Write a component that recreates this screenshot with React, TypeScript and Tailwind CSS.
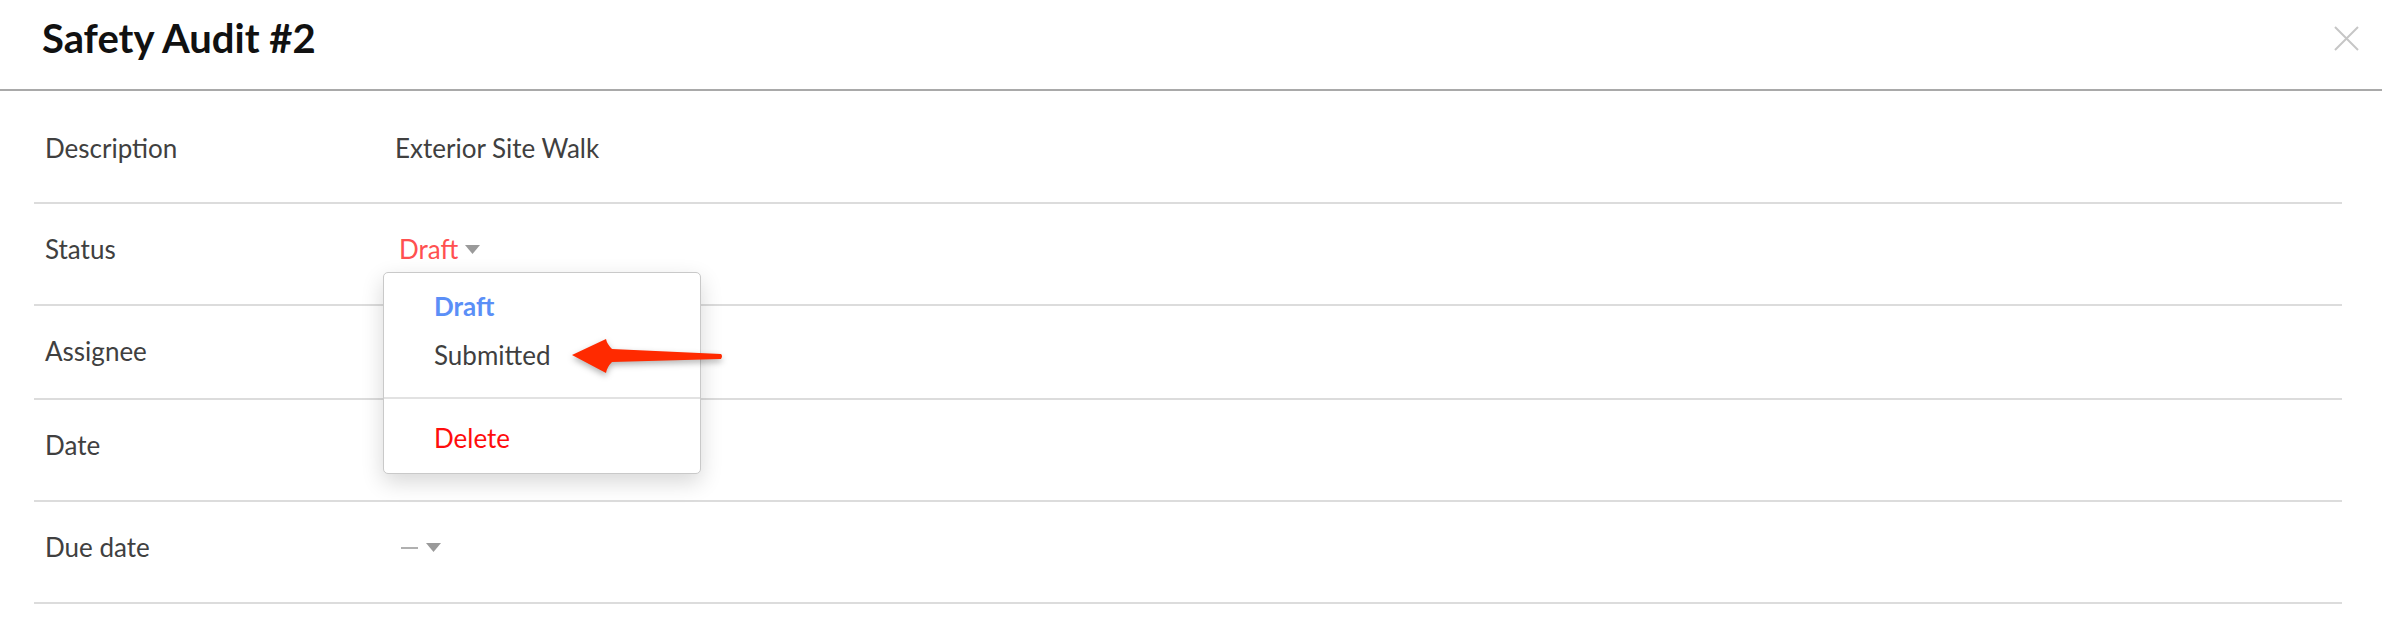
import React from 'react';

const rows = [
  { label: 'Description', h: 'h-[113px]', pt: 'pt-[38px]' },
  { label: 'Status', h: 'h-[102px]', pt: 'pt-[26px]' },
  { label: 'Assignee', h: 'h-[94px]', pt: 'pt-[26px]' },
  { label: 'Date', h: 'h-[102px]', pt: 'pt-[26px]' },
  { label: 'Due date', h: 'h-[102px]', pt: 'pt-[26px]' },
];

const Caret = () => (
  <svg width="15" height="9" viewBox="0 0 15 9" className="block">
    <path d="M0 0 L15 0 L7.5 9 Z" fill="#9a9a9a" />
  </svg>
);

const StatusMenu = () => (
  <div className="absolute left-[-12px] top-[42px] z-10 w-[318px] h-[202px] bg-white border border-[#c9c9c9] rounded-[5px] shadow-[0_8px_22px_rgba(0,0,0,0.16)] pt-[14px]">
    <div className="pl-[50px] leading-[39px] font-bold text-[#5b8ff7]">Draft</div>
    <div className="pl-[50px] mt-[10px] leading-[39px] text-[#3f3f3f]">Submitted</div>
    <div className="mt-[22px] h-[2px] bg-[#e2e2e2]" />
    <div className="pl-[50px] mt-[20px] leading-[39px] text-[#ff0d0d]">Delete</div>
  </div>
);

const Value = ({ label }: { label: string }) => {
  if (label === 'Description') {
    return <span className="text-[#404040]">Exterior Site Walk</span>;
  }
  if (label === 'Status') {
    return (
      <div className="relative">
        <div className="flex items-center gap-[7px] pl-[4px]">
          <span className="text-[#ff5050]">Draft</span>
          <Caret />
        </div>
        <StatusMenu />
      </div>
    );
  }
  if (label === 'Due date') {
    return (
      <div className="flex items-center gap-[8px] pl-[6px] h-[39px]">
        <span className="block w-[17px] h-[2px] bg-[#b0b0b0]" />
        <Caret />
      </div>
    );
  }
  return null;
};

export default function App() {
  return (
    <div className="relative w-full h-[630px] bg-white overflow-hidden font-['Lato','Noto_Sans',sans-serif]">
      <header className="h-[91px] flex items-start justify-between border-b-2 border-[#a9a9a9] pl-[42px] pr-[23px]">
        <h1 className="mt-[18px] text-[40px] leading-[40px] font-bold text-[#111]">Safety Audit #2</h1>
        <button className="mt-[26px]" aria-label="Close">
          <svg width="25" height="25" viewBox="0 0 25 25">
            <path d="M1 1 L24 24 M24 1 L1 24" stroke="#c6c6c6" strokeWidth="2" />
          </svg>
        </button>
      </header>

      <div className="pl-[34px] pr-[40px] text-[26px] leading-[39px]">
        {rows.map((r) => (
          <div key={r.label} className={`flex border-b-2 border-[#dcdcdc] ${r.h} ${r.pt}`}>
            <div className="w-[361px] pl-[11px] text-[#404040]">{r.label}</div>
            <div className="flex-1">
              <Value label={r.label} />
            </div>
          </div>
        ))}
      </div>

      {/* annotation arrow pointing at Submitted */}
      <svg
        className="absolute left-[560px] top-[328px] z-20"
        width="175"
        height="56"
        viewBox="0 0 175 56"
        style={{ filter: 'drop-shadow(0 3px 3px rgba(0,0,0,0.3))' }}
      >
        <path
          d="M12 27 L46 11 Q47 16 52 21 L161 26 Q163 28 161 31 L52 34 Q47 39 46 45 Z"
          fill="#ff2a00"
        />
      </svg>
    </div>
  );
}
